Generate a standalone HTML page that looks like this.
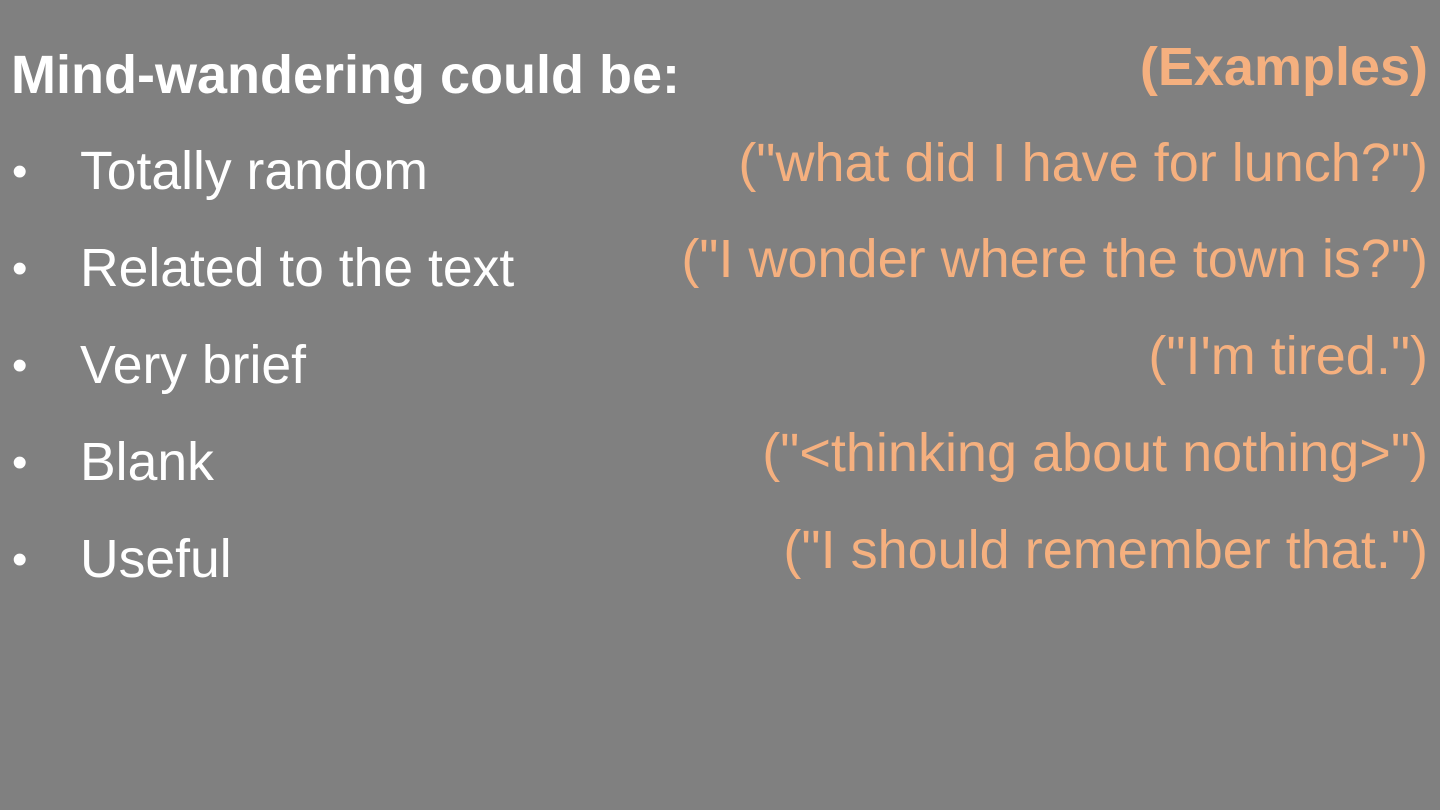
<!DOCTYPE html>
<html><head><style>
body{margin:0;width:1440px;height:810px;background:#808080;overflow:hidden;position:relative;font-family:"Liberation Sans",Arial,sans-serif}
.t{position:absolute;white-space:nowrap;line-height:1}
.w{color:#fff;font-size:53.5px;left:80px}
.b{color:#fff;font-size:44px;left:12px}
.o{color:#f5b07f;font-size:54px;right:12px}
</style></head><body>
<div class="t" style="left:11px;top:48px;color:#fff;font-weight:bold;font-size:54px">Mind-wandering could be:</div>
<div class="t o" style="top:40px;font-weight:bold">(Examples)</div>
<div class="t b" style="top:150px">•</div><div class="t w" style="top:145px">Totally random</div>
<div class="t b" style="top:247px">•</div><div class="t w" style="top:242px">Related to the text</div>
<div class="t b" style="top:344px">•</div><div class="t w" style="top:339px">Very brief</div>
<div class="t b" style="top:441px">•</div><div class="t w" style="top:436px">Blank</div>
<div class="t b" style="top:538px">•</div><div class="t w" style="top:533px">Useful</div>
<div class="t o" style="top:136px">("what did I have for lunch?")</div>
<div class="t o" style="top:232px">("I wonder where the town is?")</div>
<div class="t o" style="top:329px">("I'm tired.")</div>
<div class="t o" style="top:426px">("&lt;thinking about nothing&gt;")</div>
<div class="t o" style="top:523px">("I should remember that.")</div>
</body></html>
